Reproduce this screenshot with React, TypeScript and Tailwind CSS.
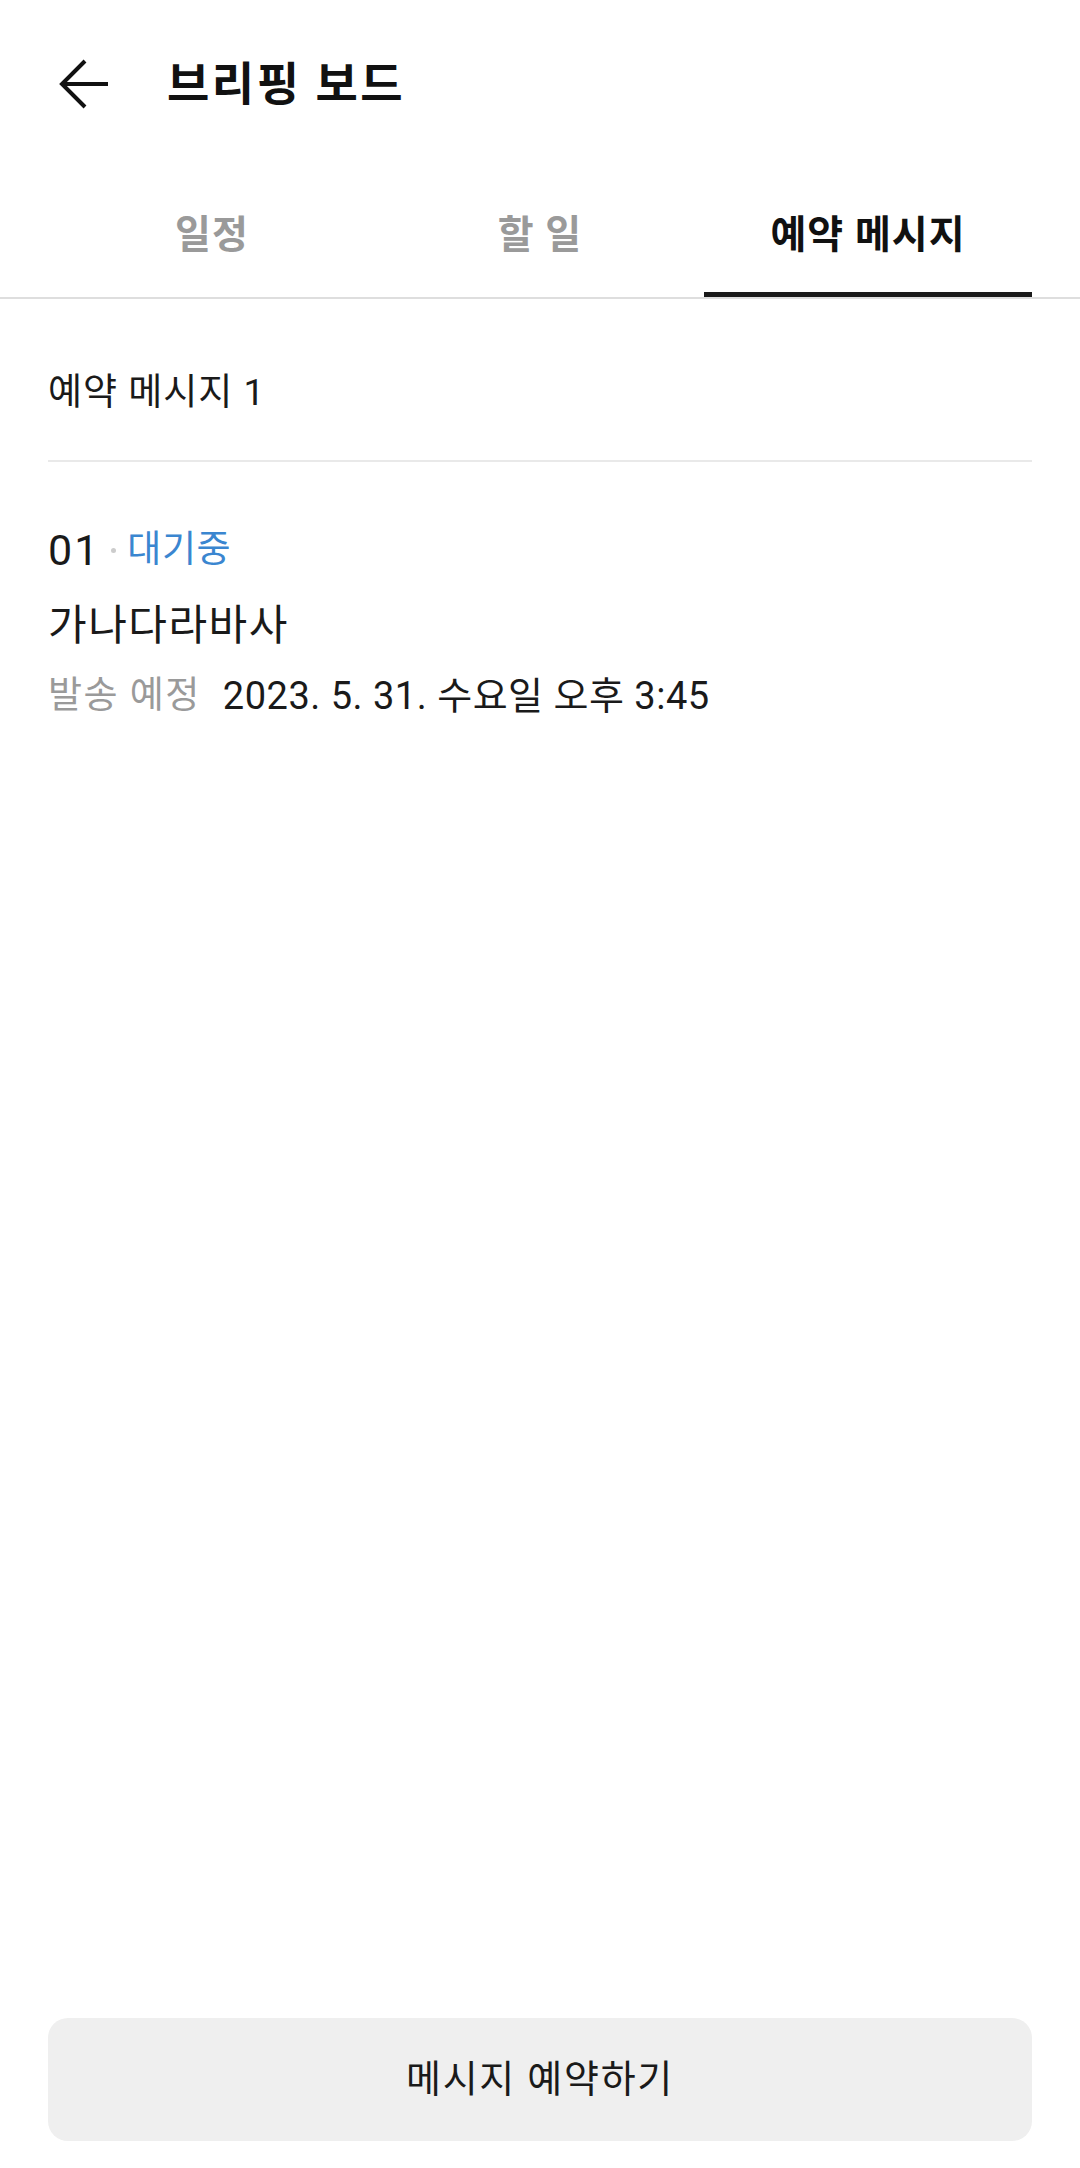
const font = "font-['Roboto','Noto_Sans_CJK_KR',sans-serif]";

function BackArrow() {
  return (
    <svg width="56" height="56" viewBox="0 0 56 56" fill="none" className="shrink-0">
      <path d="M52 28H6M29 5L6 28L29 51" stroke="#111111" strokeWidth="4" strokeLinecap="butt" strokeLinejoin="miter" />
    </svg>
  );
}

const tabs = ["일정", "할 일", "예약 메시지"];

export default function App() {
  const active = 2;
  return (
    <div className={`w-[1080px] h-[2168px] bg-white flex flex-col text-[#1a1a1a] ${font}`}>
      {/* Header */}
      <div className="h-[168px] flex items-center pl-[56px]">
        <BackArrow />
        <h1 className="ml-[55px] text-[46px] tracking-[2.5px] font-bold text-[#111111] leading-none">브리핑 보드</h1>
      </div>

      {/* Tabs */}
      <div className="border-b-2 border-[#dedede]">
        <div className="flex px-[48px]">
          {tabs.map((t, i) => (
            <div key={t} className="flex-1 flex flex-col">
              <div
                className={`h-[124px] pt-[10px] flex items-center justify-center text-[39px] tracking-[1px] font-bold ${
                  i === active ? "text-[#111111]" : "text-[#9a9a9a]"
                }`}
              >
                {t}
              </div>
              <div className={`h-[5px] ${i === active ? "bg-[#1a1a1a]" : "bg-transparent"}`} />
            </div>
          ))}
        </div>
      </div>

      {/* Count */}
      <div className="px-[48px] pt-[70px] pb-[43px] text-[37px] tracking-[1px] leading-[48px]">예약 메시지 1</div>
      <div className="mx-[48px] h-[2px] bg-[#e9e9e9]" />

      {/* Item */}
      <div className="px-[48px] pt-[62px]">
        <div className="flex items-center h-[52px]">
          <span className="text-[43px] tracking-[2px] leading-[52px]">01</span>
          <span className="mx-[11px] w-[5px] h-[5px] rounded-full bg-[#cccccc]" />
          <span className="text-[37px] tracking-[0.5px] leading-[52px] text-[#3a86d0]">대기중</span>
        </div>
        <div className="mt-[24px] text-[42px] tracking-[1.5px] leading-[52px]">가나다라바사</div>
        <div className="mt-[18px] flex items-center h-[52px]">
          <span className="text-[37px] tracking-[1.5px] leading-[52px] text-[#9a9a9a]">발송 예정</span>
          <span className="ml-[22px] text-[38px] tracking-[0.5px] leading-[52px]">2023. 5. 31. 수요일 오후 3:45</span>
        </div>
      </div>

      {/* Bottom button */}
      <div className="mt-auto px-[48px] pb-[27px]">
        <button className="w-full h-[123px] rounded-[20px] bg-[#efefef] text-[38px] tracking-[1.75px] text-[#1a1a1a] flex items-center justify-center">
          메시지 예약하기
        </button>
      </div>
    </div>
  );
}
